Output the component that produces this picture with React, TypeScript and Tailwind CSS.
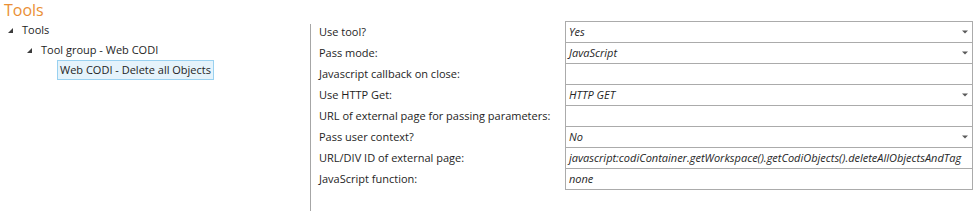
import React from 'react';

interface Field {
  label: string;
  value: string;
  dropdown?: boolean;
}

const fields: Field[] = [
  { label: 'Use tool?', value: 'Yes', dropdown: true },
  { label: 'Pass mode:', value: 'JavaScript', dropdown: true },
  { label: 'Javascript callback on close:', value: '' },
  { label: 'Use HTTP Get:', value: 'HTTP GET', dropdown: true },
  { label: 'URL of external page for passing parameters:', value: '' },
  { label: 'Pass user context?', value: 'No', dropdown: true },
  {
    label: 'URL/DIV ID of external page:',
    value: 'javascript:codiContainer.getWorkspace().getCodiObjects().deleteAllObjectsAndTag',
  },
  { label: 'JavaScript function:', value: 'none' },
];

const Expander = () => (
  <svg width="5" height="5" viewBox="0 0 5 5" className="shrink-0">
    <polygon points="5,0 5,5 0,5" fill="#3c3c3c" />
  </svg>
);

const Caret = () => (
  <svg width="6" height="4" viewBox="0 0 6 4" className="shrink-0">
    <polygon points="0,0.5 6,0.5 3,3.5" fill="#5a5a5a" />
  </svg>
);

const App: React.FC = () => {
  return (
    <div
      className="w-[976px] h-[211px] bg-white overflow-hidden text-[11px] text-[#1e1e1e]"
      style={{ fontFamily: '"Open Sans", "Noto Sans", Arial, sans-serif' }}
    >
      <h1 className="pl-[4px] text-[16px] leading-[20px] text-[#ea8f35]">Tools</h1>

      <div className="flex h-[191px]">
        {/* tree */}
        <div className="w-[310px] shrink-0">
          <div className="flex items-center h-[20px] pl-[8px] gap-[9px]">
            <Expander />
            <span>Tools</span>
          </div>
          <div className="flex items-center h-[20px] pl-[27px] gap-[9px]">
            <Expander />
            <span>Tool group - Web CODI</span>
          </div>
          <div className="flex items-center h-[20px] pl-[57px]">
            <span className="h-[20px] leading-[18px] px-[2px] border border-[#99d1f0] bg-[#e5f3fb]">
              Web CODI - Delete all Objects
            </span>
          </div>
        </div>

        <div className="w-px bg-[#a6a6a6] mt-[4px] shrink-0" />

        {/* properties */}
        <div className="pl-[8px] pt-px">
          <div className="grid grid-cols-[246px_408px]">
            <div>
              {fields.map((f) => (
                <div key={f.label} className="h-[21px] flex items-center pt-[2px] whitespace-nowrap">
                  {f.label}
                </div>
              ))}
            </div>
            <div className="border border-b-0 border-[#ababab]">
              {fields.map((f) => (
                <div
                  key={f.label}
                  className="h-[21px] flex items-center justify-between border-b border-[#ababab] pl-[3px] pr-[4px] italic text-[#262626] whitespace-nowrap overflow-hidden"
                >
                  <span>{f.value}</span>
                  {f.dropdown && <Caret />}
                </div>
              ))}
            </div>
          </div>
        </div>
      </div>
    </div>
  );
};

export default App;
